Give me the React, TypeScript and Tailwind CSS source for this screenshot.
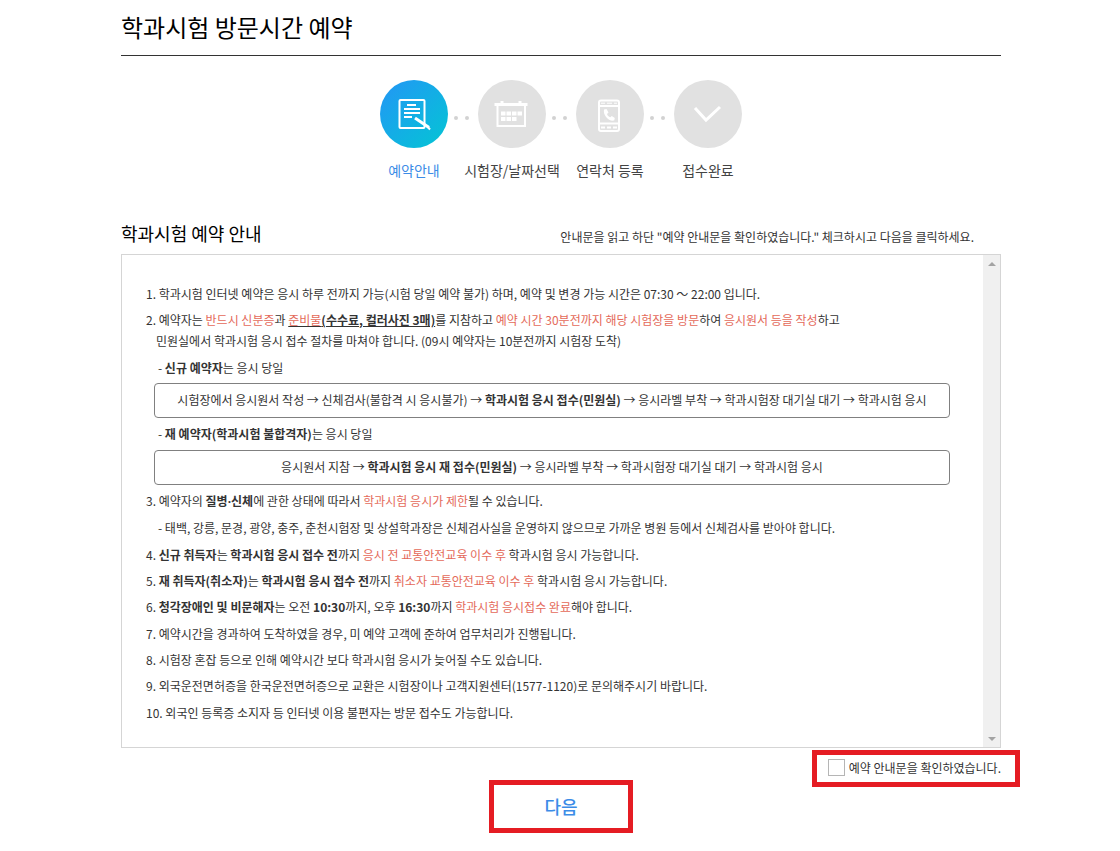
import type { ReactNode } from "react";

const steps: { label: string; icon: ReactNode }[] = [
  {
    label: "예약안내",
    icon: (
      <>
        <rect x="19.5" y="20" width="25" height="28" rx="1" strokeWidth="2" />
        <path d="M27 25h9M24 29h16M24 33h16M24 37h8" strokeWidth="2" />
        <path d="M35 38l14 9.500" strokeWidth="3" />
        <path d="M47 46l3 3.500" strokeWidth="2" />
      </>
    ),
  },
  {
    label: "시험장/날짜선택",
    icon: (
      <>
        <path d="M19.500 25v21h27.500V25" strokeWidth="2" />
        <path d="M16.500 24.500h33" strokeWidth="3" />
        <path d="M24 21v4M42 21v4" strokeWidth="3" />
        <path d="M23 33.500h21M23 39h15.500" strokeWidth="4" strokeDasharray="4.500 1" />
      </>
    ),
  },
  {
    label: "연락처 등록",
    icon: (
      <>
        <rect x="23" y="20.500" width="20" height="30.500" rx="2" strokeWidth="2" />
        <path d="M23 26h20M23 43.500h20" strokeWidth="2" />
        <path d="M25 23.200h4M31 23.200h5M38 23.200h3" strokeWidth="1" />
        <path d="M25 47.500h4M31 47.500h4M37 47.500h4" strokeWidth="2" />
        <path
          d="M28 29.500l2.500-.500 2 3.500-1.500 1.500c.6 1.700 1.600 2.700 3.300 3.300l1.500-1.300 3 2-.6 2.500c-5.500 1.200-11.400-5.200-10.200-11z"
          fill="currentColor"
          stroke="none"
        />
      </>
    ),
  },
  {
    label: "접수완료",
    icon: <path d="M21 28L32 40L46 27" strokeWidth="3" />,
  },
];

function Red({ children }: { children: ReactNode }) {
  return <span className="text-[#e46a5a]">{children}</span>;
}

function FlowBox({ children }: { children: ReactNode }) {
  return (
    <div className="ml-2 flex min-h-[35px] items-center justify-center rounded-[4px] border border-[#808080] pb-[2px]">
      <p>{children}</p>
    </div>
  );
}

function Steps() {
  return (
    <ol className="mt-6 flex justify-center">
      {steps.map((step, i) => (
        <li key={step.label} className="relative flex w-[98px] flex-col items-center">
          <div
            className={`flex size-[68px] items-center justify-center rounded-full text-white ${
              i === 0 ? "bg-linear-to-br from-[#2395f5] to-[#05c5d3]" : "bg-[#e1e1e1]"
            }`}
          >
            <svg viewBox="0 0 68 68" className="size-[68px]" fill="none" stroke="currentColor" aria-hidden="true">
              {step.icon}
            </svg>
          </div>
          {i < steps.length - 1 && (
            <span className="absolute top-9 -right-[6px] flex gap-[7px]">
              <i className="size-1 rounded-full bg-[#d2d2d2]" />
              <i className="size-1 rounded-full bg-[#d2d2d2]" />
            </span>
          )}
          <span
            className={`mt-3 text-[14px] leading-[21px] whitespace-nowrap ${
              i === 0 ? "text-[#3c8ce7]" : "text-[#444]"
            }`}
          >
            {step.label}
          </span>
        </li>
      ))}
    </ol>
  );
}

function ScrollBar() {
  return (
    <div className="flex w-[17px] shrink-0 flex-col justify-between bg-[#f0f0f0]">
      <button type="button" aria-label="위로" className="flex h-[17px] items-center justify-center text-[#a3a3a3]">
        <svg viewBox="0 0 8 4" className="h-1 w-2" fill="currentColor">
          <path d="M0 4L4 0L8 4z" />
        </svg>
      </button>
      <button type="button" aria-label="아래로" className="flex h-[17px] items-center justify-center text-[#a3a3a3]">
        <svg viewBox="0 0 8 4" className="h-1 w-2" fill="currentColor">
          <path d="M0 0L4 4L8 0z" />
        </svg>
      </button>
    </div>
  );
}

function Notice() {
  return (
    <div className="flex min-h-[494px] border border-[#d5d5d5]">
      <div className="flex flex-1 flex-col justify-between pt-7 pr-[33px] pb-6 pl-6">
        <p>1. 학과시험 인터넷 예약은 응시 하루 전까지 가능(시험 당일 예약 불가) 하며, 예약 및 변경 가능 시간은 07:30 ～ 22:00 입니다.</p>
        <div>
          <p>
            2. 예약자는 <Red>반드시 신분증</Red>과{" "}
            <a href="#supplies" className="underline">
              <Red>준비물</Red>
              <b>(수수료, 컬러사진 3매)</b>
            </a>
            를 지참하고 <Red>예약 시간 30분전까지 해당 시험장을 방문</Red>하여 <Red>응시원서 등을 작성</Red>하고
          </p>
          <p className="pl-[10px]">민원실에서 학과시험 응시 접수 절차를 마쳐야 합니다. (09시 예약자는 10분전까지 시험장 도착)</p>
        </div>
        <p className="pl-3">
          - <b>신규 예약자</b>는 응시 당일
        </p>
        <FlowBox>
          시험장에서 응시원서 작성 → 신체검사(불합격 시 응시불가) → <b>학과시험 응시 접수(민원실)</b> → 응시라벨 부착 → 학과시험장 대기실 대기 → 학과시험 응시
        </FlowBox>
        <p className="pl-3">
          - <b>재 예약자(학과시험 불합격자)</b>는 응시 당일
        </p>
        <FlowBox>
          응시원서 지참 → <b>학과시험 응시 재 접수(민원실)</b> → 응시라벨 부착 → 학과시험장 대기실 대기 → 학과시험 응시
        </FlowBox>
        <p>
          3. 예약자의{" "}
          <b>
            질병<span className="font-['Noto_Sans',sans-serif]">·</span>신체
          </b>
          에 관한 상태에 따라서 <Red>학과시험 응시가 제한</Red>될 수 있습니다.
        </p>
        <p className="pl-3">- 태백, 강릉, 문경, 광양, 충주, 춘천시험장 및 상설학과장은 신체검사실을 운영하지 않으므로 가까운 병원 등에서 신체검사를 받아야 합니다.</p>
        <p>
          4. <b>신규 취득자</b>는 <b>학과시험 응시 접수 전</b>까지 <Red>응시 전 교통안전교육 이수 후</Red> 학과시험 응시 가능합니다.
        </p>
        <p>
          5. <b>재 취득자(취소자)</b>는 <b>학과시험 응시 접수 전</b>까지 <Red>취소자 교통안전교육 이수 후</Red> 학과시험 응시 가능합니다.
        </p>
        <p>
          6. <b>청각장애인 및 비문해자</b>는 오전 <b>10:30</b>까지, 오후 <b>16:30</b>까지 <Red>학과시험 응시접수 완료</Red>해야 합니다.
        </p>
        <p>7. 예약시간을 경과하여 도착하였을 경우, 미 예약 고객에 준하여 업무처리가 진행됩니다.</p>
        <p>8. 시험장 혼잡 등으로 인해 예약시간 보다 학과시험 응시가 늦어질 수도 있습니다.</p>
        <p>9. 외국운전면허증을 한국운전면허증으로 교환은 시험장이나 고객지원센터(1577-1120)로 문의해주시기 바랍니다.</p>
        <p>10. 외국인 등록증 소지자 등 인터넷 이용 불편자는 방문 접수도 가능합니다.</p>
      </div>
      <ScrollBar />
    </div>
  );
}

export default function App() {
  return (
    <div className="min-h-screen bg-white pl-[2px] font-['Noto_Sans_CJK_KR',sans-serif] text-[12px] leading-[21px] text-[#333]">
      <main className="mx-auto max-w-[880px]">
        <h1 className="border-b border-[#333] pt-[9px] pb-[10px] text-[24px] leading-9 text-black">학과시험 방문시간 예약</h1>
        <Steps />

        <div className="mt-[39px] flex items-center justify-between pr-[27px]">
          <h2 className="text-[18px] leading-[27px] text-black">학과시험 예약 안내</h2>
          <p className="pt-[6px]">안내문을 읽고 하단 "예약 안내문을 확인하였습니다." 체크하시고 다음을 클릭하세요.</p>
        </div>
        <div className="mt-[7px]">
          <Notice />
        </div>

        <div className="-mr-[19px] mt-[2px] flex justify-end">
          <label className="flex h-[37px] items-center border-5 border-[#e51c23] pr-[14px] pb-[2px] pl-[11px]">
            <input type="checkbox" className="mr-1 size-[17px] appearance-none border border-[#b5b5b5] bg-white checked:bg-[#3c8ce7]" />
            예약 안내문을 확인하였습니다.
          </label>
        </div>
        <div className="-mt-[7px] flex justify-center">
          <button type="button" className="h-[53px] w-36 border-5 border-[#e51c23] text-[18px] font-medium text-[#3c8ce7]">
            다음
          </button>
        </div>
      </main>
    </div>
  );
}
